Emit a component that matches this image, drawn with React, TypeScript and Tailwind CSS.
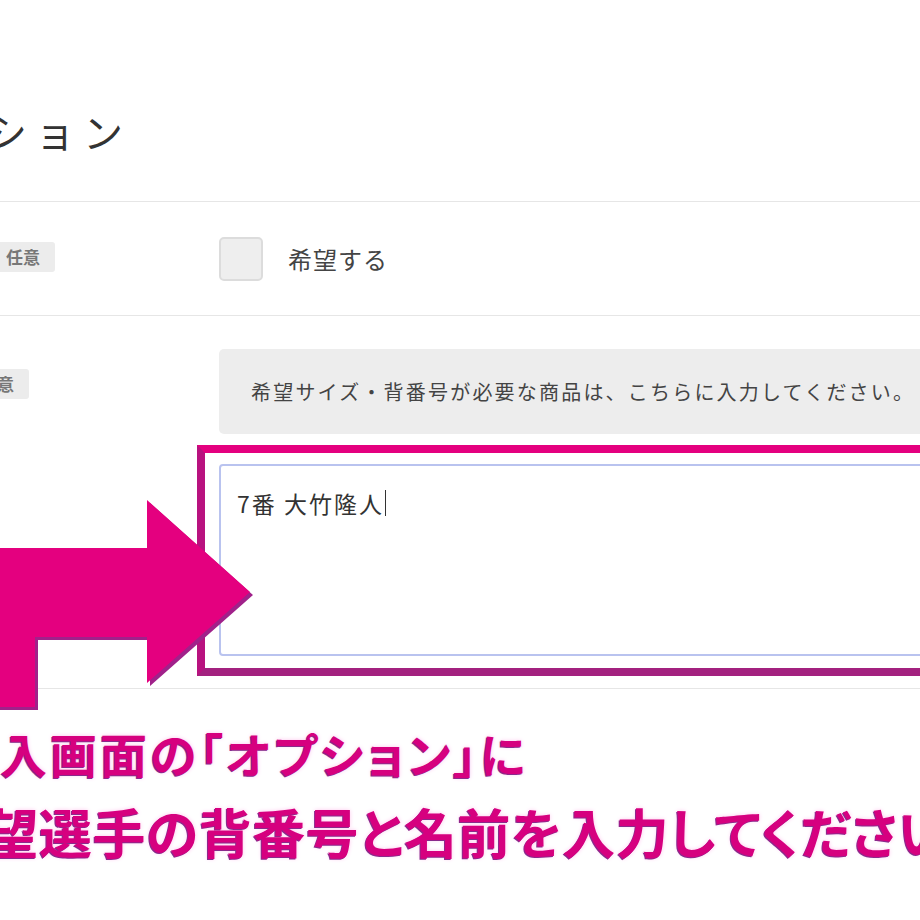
import type { ReactNode } from 'react';

const jp = "font-['Noto_Sans_CJK_JP','Noto_Sans',sans-serif]";

function Badge({ shift }: { shift: string }) {
  return (
    <span
      className={`${shift} inline-block rounded-[3px] bg-[#ececec] px-[15px] text-[17px] leading-[30px] font-bold text-[#777]`}
    >
      任意
    </span>
  );
}

function Row({ label, children, className }: { label: ReactNode; children: ReactNode; className: string }) {
  return (
    <div className={`flex border-b border-[#e6e6e6] ${className}`}>
      <div className="w-[219px] shrink-0">{label}</div>
      <div className="w-[760px] shrink-0">{children}</div>
    </div>
  );
}

function Arrow() {
  return (
    <svg
      className="absolute left-0 top-[490px] z-10"
      width="270"
      height="230"
      viewBox="0 490 270 230"
      aria-hidden="true"
    >
      <polygon
        points="-10,551 150,551 150,503 253,595 150,686 150,640 38,640 38,710 -10,710"
        fill="#a0218a"
      />
      <polygon
        points="-10,548 147,548 147,500 250,592 147,683 147,637 35,637 35,707 -10,707"
        fill="#e4007f"
      />
    </svg>
  );
}

export default function App() {
  return (
    <div className={`relative h-[920px] w-[920px] overflow-hidden bg-white ${jp}`}>
      <div className="h-[202px] border-b border-[#e6e6e6] pt-[107px]">
        <h2 className="-ml-[109px] whitespace-nowrap text-[40px] font-normal leading-[48px] tracking-[8px] text-[#333]">
          オプション
        </h2>
      </div>

      <Row
        className="h-[114px] items-center"
        label={<Badge shift="-ml-[9px] -mt-[6px]" />}
      >
        <div className="flex items-center gap-[25px]">
          <div className="h-[44px] w-[44px] rounded-[5px] border-2 border-[#dcdcdc] bg-[#eeeeee]" />
          <span className="text-[24px] leading-[30px] tracking-[1px] text-[#444]">希望する</span>
        </div>
      </Row>

      <Row className="pb-[12px] pt-[33px]" label={<div className="pt-[20px]"><Badge shift="-ml-[35px]" /></div>}>
        <div className="flex h-[85px] items-center rounded-[5px] bg-[#ededed] px-[32px]">
          <span className="whitespace-nowrap text-[20px] tracking-[2.2px] text-[#444]">
            希望サイズ・背番号が必要な商品は、こちらに入力してください。
          </span>
        </div>
        <div className="-ml-[22px] mt-[11px] border-8 border-[#e4007f] border-b-[#a3217f] border-l-[#b8127f] pb-[12px] pl-[14px] pt-[11px]">
          <div className="h-[192px] rounded-[4px] border-2 border-[#b9c3ef] bg-white pl-[16px] pt-[22px]">
            <div className="flex items-center text-[23px] leading-[30px] tracking-[2px] text-[#333]">
              <span>7番 大竹隆人</span>
              <span className="ml-[1px] h-[26px] w-[1px] bg-[#333]" />
            </div>
          </div>
        </div>
      </Row>

      <div className="pt-[32px] font-bold text-[#d6007f] [font-feature-settings:'palt'] [text-shadow:-1px_1px_0_#8a2a8c,0_0_4px_#ffc6ee]">
        <p className="-ml-[50px] whitespace-nowrap text-[47px] leading-[64px] tracking-[3px]">
          購入画面の「オプション」に
        </p>
        <p className="-ml-[68px] mt-[7px] whitespace-nowrap text-[53px] leading-[78px] tracking-[0.5px]">
          希望選手の背番号と名前を入力してください。
        </p>
      </div>

      <Arrow />
    </div>
  );
}
